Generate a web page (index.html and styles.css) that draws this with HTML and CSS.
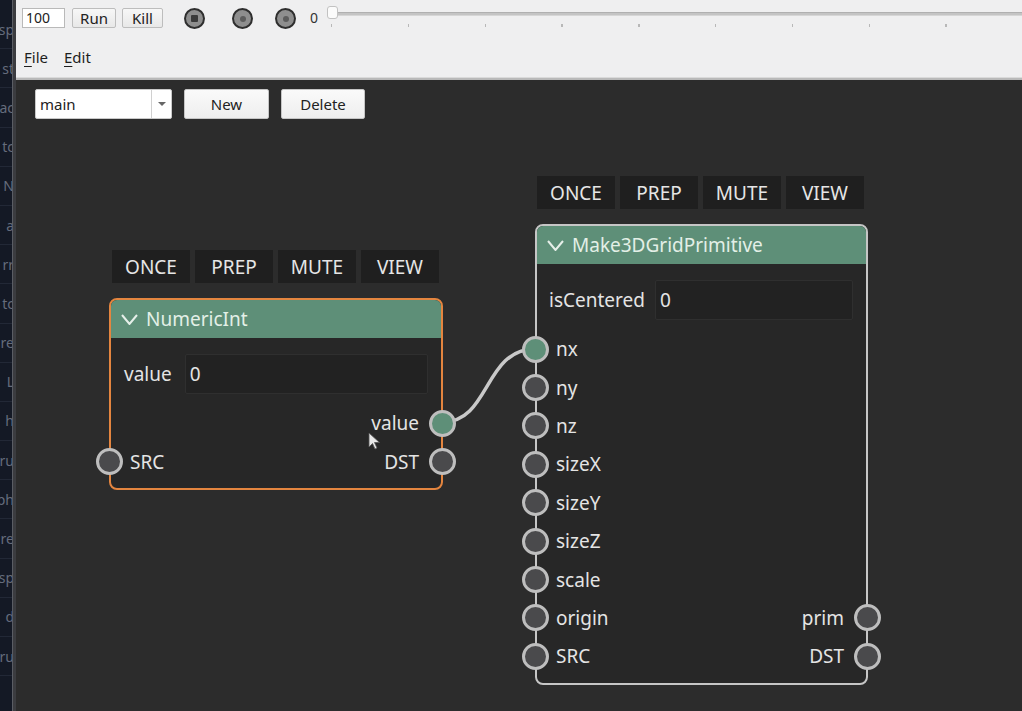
FILE: index.html
```html
<!DOCTYPE html>
<html>
<head>
<meta charset="utf-8">
<link rel="stylesheet" href="styles.css">
</head>
<body>
<div class="root">
  <aside class="side-strip">
    <div class="side-row">sp</div><div class="side-row">st</div><div class="side-row">ac</div><div class="side-row">tc</div>
    <div class="side-row">N</div><div class="side-row">a</div><div class="side-row">rr</div><div class="side-row">tc</div>
    <div class="side-row">re</div><div class="side-row">L</div><div class="side-row">h</div><div class="side-row">ru</div>
    <div class="side-row">ph</div><div class="side-row">re</div><div class="side-row">sp</div><div class="side-row">d</div>
    <div class="side-row">ru</div><div class="side-row"></div>
  </aside>
  <div class="side-divider"></div>
  <main class="app">
    <div class="toolbar">
      <div class="tb-input">100</div>
      <button class="tb-btn">Run</button>
      <button class="tb-btn">Kill</button>
      <div class="radios">
        <span class="radio"><span class="radio-dot"></span></span>
        <span class="radio"><span class="radio-dot"></span></span>
        <span class="radio"><span class="radio-dot"></span></span>
      </div>
      <span class="tb-zero">0</span>
      <div class="slider">
        <div class="slider-track"></div>
        <div class="slider-thumb"></div>
        <div class="slider-ticks"></div>
      </div>
    </div>
    <div class="menubar">
      <span class="menu-item"><u>F</u>ile</span>
      <span class="menu-item"><u>E</u>dit</span>
    </div>
    <div class="canvas">
      <div class="canvas-controls">
        <div class="combo"><span class="combo-text">main</span><span class="combo-arrow"><svg width="8" height="5" viewBox="0 0 8 5"><path d="M0 0 L8 0 L4 4 Z" fill="#666"/></svg></span></div>
        <button class="cv-btn btn-new">New</button>
        <button class="cv-btn btn-delete">Delete</button>
      </div>

      <svg class="wires" width="1006" height="631" viewBox="0 0 1006 631">
        <path d="M427 342 C 474 342, 468 269, 519 269" fill="none" stroke="#c9c9c9" stroke-width="3.5"/>
      </svg>

      <div class="node node-a">
        <div class="node-flags">
          <span class="flag">ONCE</span><span class="flag">PREP</span><span class="flag">MUTE</span><span class="flag">VIEW</span>
        </div>
        <div class="node-box box-selected">
          <div class="node-head">
            <svg class="chev" width="17" height="11" viewBox="0 0 17 11"><polyline points="1,1 8.5,10 16,1" fill="none" stroke="#e6efe9" stroke-width="2"/></svg>
            <span class="node-title">NumericInt</span>
          </div>
          <div class="node-body">
            <div class="field-row"><span class="field-label">value</span><div class="field-input">0</div></div>
            <div class="port-rows">
              <div class="port-row"><span class="spacer"></span><span class="port-label">value</span><span class="port port-out port-on"></span></div>
              <div class="port-row"><span class="port port-in"></span><span class="port-label">SRC</span><span class="spacer"></span><span class="port-label">DST</span><span class="port port-out"></span></div>
            </div>
          </div>
        </div>
      </div>

      <div class="node node-b">
        <div class="node-flags">
          <span class="flag">ONCE</span><span class="flag">PREP</span><span class="flag">MUTE</span><span class="flag">VIEW</span>
        </div>
        <div class="node-box">
          <div class="node-head">
            <svg class="chev" width="17" height="11" viewBox="0 0 17 11"><polyline points="1,1 8.5,10 16,1" fill="none" stroke="#e6efe9" stroke-width="2"/></svg>
            <span class="node-title">Make3DGridPrimitive</span>
          </div>
          <div class="node-body">
            <div class="field-row"><span class="field-label">isCentered</span><div class="field-input">0</div></div>
            <div class="port-rows">
              <div class="port-row"><span class="port port-in port-on"></span><span class="port-label">nx</span></div>
              <div class="port-row"><span class="port port-in"></span><span class="port-label">ny</span></div>
              <div class="port-row"><span class="port port-in"></span><span class="port-label">nz</span></div>
              <div class="port-row"><span class="port port-in"></span><span class="port-label">sizeX</span></div>
              <div class="port-row"><span class="port port-in"></span><span class="port-label">sizeY</span></div>
              <div class="port-row"><span class="port port-in"></span><span class="port-label">sizeZ</span></div>
              <div class="port-row"><span class="port port-in"></span><span class="port-label">scale</span></div>
              <div class="port-row"><span class="port port-in"></span><span class="port-label">origin</span><span class="spacer"></span><span class="port-label">prim</span><span class="port port-out"></span></div>
              <div class="port-row"><span class="port port-in"></span><span class="port-label">SRC</span><span class="spacer"></span><span class="port-label">DST</span><span class="port port-out"></span></div>
            </div>
          </div>
        </div>
      </div>

      <svg class="cursor" width="14" height="20" viewBox="0 0 14 20">
        <path d="M1 1 L1 15 L4.5 11.5 L7 17 L9 16 L6.5 10.5 L11.5 10.5 Z" fill="#e8e8e8" stroke="#555" stroke-width="0.8"/>
      </svg>
    </div>
  </main>
</div>
</body>
</html>
```

FILE: styles.css
```css
* { box-sizing: border-box; }
html, body { margin: 0; padding: 0; }
body {
  width: 1022px;
  height: 711px;
  overflow: hidden;
  font-family: "Noto Sans", "Open Sans", sans-serif;
  background: #2c2c2c;
}
.root {
  display: flex;
  width: 1022px;
  height: 711px;
}
.side-strip {
  width: 12px;
  flex: none;
  background: #141925;
  overflow: hidden;
  display: flex;
  flex-direction: column;
  padding-top: 10px;
}
.side-row {
  height: 39.2px;
  flex: none;
  border-bottom: 1px solid #222836;
  display: flex;
  align-items: center;
  justify-content: flex-end;
  color: #656c7c;
  font-size: 14px;
  white-space: nowrap;
  margin-right: -2px;
}
.side-divider {
  width: 4px;
  flex: none;
  background: linear-gradient(to right, #5a5d64 0, #5a5d64 1px, #3b3c40 1px);
}
.app {
  flex: 1;
  display: flex;
  flex-direction: column;
  min-width: 0;
}
.toolbar {
  height: 40px;
  flex: none;
  background: #efeff0;
  display: flex;
  align-items: flex-start;
  padding: 8px 0 0 6px;
  font-size: 15px;
  color: #222;
}
.tb-input {
  width: 43px;
  height: 20px;
  background: #fff;
  border: 1px solid #b9b9b9;
  padding-left: 3px;
  line-height: 18px;
  font-size: 14px;
}
.tb-btn {
  height: 20px;
  border: 1px solid #bdbdbd;
  border-radius: 2px;
  background: linear-gradient(#f7f7f7, #e8e8e8);
  font-family: "Noto Sans", sans-serif;
  font-size: 15px;
  color: #222;
  padding: 0;
  line-height: 17px;
}
.tb-btn:nth-of-type(1) { width: 44px; margin-left: 7px; }
.tb-btn:nth-of-type(2) { width: 41px; margin-left: 6px; }
.radios {
  display: flex;
  margin-left: 21px;
  margin-top: 0px;
}
.radio {
  width: 21px;
  height: 21px;
  border-radius: 50%;
  border: 2.5px solid #2e2e2e;
  background: #8e8e8e;
  display: flex;
  align-items: center;
  justify-content: center;
}
.radio + .radio { margin-left: 27px; }
.radio + .radio + .radio { margin-left: 22px; }
.radio-dot {
  width: 6px;
  height: 6px;
  border-radius: 50%;
  background: #5c5c5c;
}
.radio:first-child .radio-dot { background: #3a3a3a; width: 7px; height: 7px; border-radius: 1px; }
.tb-zero {
  margin-left: 14px;
  font-size: 14px;
  line-height: 20px;
  color: #333;
}
.slider {
  flex: 1;
  position: relative;
  height: 24px;
  margin-left: 9px;
}
.slider-track {
  position: absolute;
  left: 0;
  right: 0;
  top: 4px;
  height: 4px;
  background: #c4c4c4;
  border-top: 1px solid #b0b0b0;
  border-bottom: 1px solid #d6d6d6;
}
.slider-thumb {
  position: absolute;
  left: 0;
  top: -2px;
  width: 11px;
  height: 13px;
  background: #fbfbfb;
  border: 1px solid #c2c2c2;
  border-radius: 3px;
}
.slider-ticks {
  position: absolute;
  left: 4px;
  right: 0;
  top: 16px;
  height: 3px;
  background: repeating-linear-gradient(to right, #b8b8b8 0, #b8b8b8 1.5px, transparent 1.5px, transparent 76.8px);
}
.menubar {
  height: 40px;
  flex: none;
  background: #efeff0;
  border-bottom: 2px solid #b9b9b9;
  box-shadow: inset 0 -6px 0 -5px #dadada;
  display: flex;
  align-items: center;
  padding-left: 8px;
  padding-bottom: 4px;
  font-size: 15px;
  color: #1e1e1e;
}
.menu-item + .menu-item { margin-left: 16px; }
.menu-item u { text-underline-offset: 3px; }
.canvas {
  flex: 1;
  position: relative;
  background: #2c2c2c;
  overflow: hidden;
}
.canvas-controls {
  display: flex;
  padding: 9px 0 0 19px;
  gap: 12px;
}
.combo {
  width: 137px;
  height: 30px;
  background: #fff;
  border: 1px solid #c9c9c9;
  border-radius: 2px;
  display: flex;
  align-items: center;
  font-size: 15px;
  color: #222;
}
.combo-text { flex: 1; padding-left: 4px; }
.combo-arrow {
  width: 20px;
  height: 100%;
  border-left: 1px solid #d0d0d0;
  display: flex;
  align-items: center;
  justify-content: center;
}
.cv-btn {
  height: 30px;
  background: linear-gradient(#fafafa, #eeeeee);
  border: 1px solid #c5c5c5;
  border-radius: 2px;
  font-family: "Noto Sans", sans-serif;
  font-size: 15px;
  color: #222;
  padding: 0;
}
.btn-new { width: 85px; }
.btn-delete { width: 84px; }
.wires {
  position: absolute;
  left: 0;
  top: 0;
}
.node {
  position: absolute;
  display: flex;
  flex-direction: column;
  color: #e4e4e4;
}
.node-a { left: 93px; top: 170px; width: 334px; }
.node-b { left: 519px; top: 96px; width: 333px; }
.node-flags {
  display: flex;
  gap: 5px;
  margin-left: 3px;
}
.node-b .node-flags { margin-left: 2px; }
.flag {
  width: 78px;
  height: 33px;
  background: #1f1f1f;
  display: flex;
  align-items: center;
  justify-content: center;
  font-size: 19px;
  color: #e6e6e6;
}
.node-box {
  margin-top: 15px;
  border: 2px solid #c6c6c6;
  border-radius: 8px;
  background: #272727;
}
.box-selected { border-color: #e4853f; }
.node-head {
  height: 38px;
  background: #5e8f78;
  border-radius: 6px 6px 0 0;
  display: flex;
  align-items: center;
  padding-left: 10px;
  gap: 8px;
}
.node-title {
  font-size: 19px;
  color: #e3efe7;
}
.node-body {
  padding: 16px 0 7px 0;
}
.field-row {
  display: flex;
  align-items: center;
  padding: 0 13px 0 13px;
  height: 40px;
}
.node-b .field-row { padding-left: 12px; }
.field-label { font-size: 19px; }
.field-input {
  flex: 1;
  margin-left: 12px;
  height: 40px;
  background: #222222;
  border: 1px solid #2f2f2f;
  border-radius: 2px;
  display: flex;
  align-items: center;
  padding-left: 4px;
  font-size: 19px;
}
.node-a .field-input { margin-left: 13px; }
.node-b .field-input { margin-left: 10px; }
.port-rows {
  margin-top: 10px;
  display: flex;
  flex-direction: column;
}
.port-row {
  position: relative;
  height: 38.4px;
  display: flex;
  align-items: center;
  padding: 0 22px 0 19px;
  font-size: 19px;
}
.spacer { flex: 1; }
.port {
  position: absolute;
  top: 50%;
  width: 27px;
  height: 27px;
  margin-top: -13.5px;
  border-radius: 50%;
  border: 3px solid #bebebe;
  background: #4a4a4c;
  z-index: 2;
}
.port-in { left: -15px; }
.port-out { right: -15px; }
.port-on { background: #5e8f78; }
.cursor {
  position: absolute;
  left: 352px;
  top: 352px;
  z-index: 5;
}
```
